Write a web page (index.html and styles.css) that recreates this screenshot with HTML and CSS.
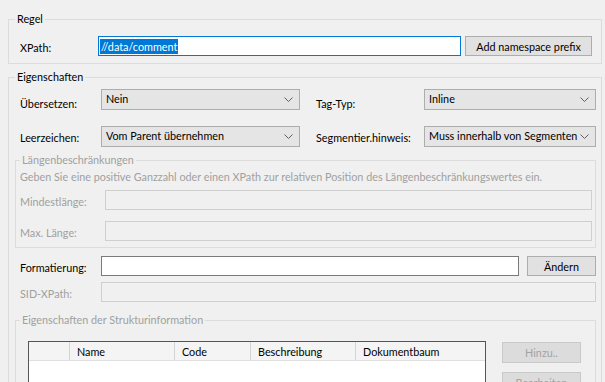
FILE: index.html
```html
<!DOCTYPE html>
<html lang="de">

<head>
    <meta charset="UTF-8">
    <title>Regel bearbeiten</title>
    <link rel="stylesheet" href="styles.css">
</head>

<body>
    <div class="dialog">
        <!-- Regel -->
        <fieldset class="group group-rule">
            <legend>Regel</legend>
            <div class="row">
                <label class="lbl lbl-xpath">XPath:</label>
                <div class="textbox focused"><span class="selected">//data/comment</span></div>
                <button class="btn btn-ns">Add namespace prefix</button>
            </div>
        </fieldset>

        <!-- Eigenschaften -->
        <fieldset class="group group-props">
            <legend>Eigenschaften</legend>

            <div class="props-grid">
                <label class="lbl lbl-low">Übersetzen:</label>
                <div class="combo"><span>Nein</span>
                    <svg class="chevron" width="9" height="5" viewBox="0 0 9 5"><polyline points="0.5,0.5 4.5,4.5 8.5,0.5" /></svg>
                </div>
                <label class="lbl lbl-right lbl-low">Tag-Typ:</label>
                <div class="combo"><span>Inline</span>
                    <svg class="chevron" width="9" height="5" viewBox="0 0 9 5"><polyline points="0.5,0.5 4.5,4.5 8.5,0.5" /></svg>
                </div>

                <label class="lbl">Leerzeichen:</label>
                <div class="combo"><span>Vom Parent übernehmen</span>
                    <svg class="chevron" width="9" height="5" viewBox="0 0 9 5"><polyline points="0.5,0.5 4.5,4.5 8.5,0.5" /></svg>
                </div>
                <label class="lbl lbl-right">Segmentier.hinweis:</label>
                <div class="combo"><span>Muss innerhalb von Segmenten</span>
                    <svg class="chevron" width="9" height="5" viewBox="0 0 9 5"><polyline points="0.5,0.5 4.5,4.5 8.5,0.5" /></svg>
                </div>
            </div>

            <!-- Längenbeschränkungen (disabled) -->
            <fieldset class="group sub disabled group-length">
                <legend>Längenbeschränkungen</legend>
                <p class="hint">Geben Sie eine positive Ganzzahl oder einen XPath zur relativen Position des Längenbeschränkungswertes ein.</p>
                <div class="row row-min">
                    <label class="lbl lbl-len">Mindestlänge:</label>
                    <div class="textbox off"></div>
                </div>
                <div class="row row-max">
                    <label class="lbl lbl-len">Max. Länge:</label>
                    <div class="textbox off"></div>
                </div>
            </fieldset>

            <div class="row row-format">
                <label class="lbl">Formatierung:</label>
                <div class="textbox plain"></div>
                <button class="btn btn-change">Ändern</button>
            </div>
            <div class="row row-sid">
                <label class="lbl lbl-off">SID-XPath:</label>
                <div class="textbox off"></div>
            </div>

            <!-- Strukturinformation (disabled) -->
            <fieldset class="group sub disabled group-struct">
                <legend>Eigenschaften der Strukturinformation</legend>
                <div class="struct-body">
                    <div class="list">
                        <div class="list-head">
                            <span class="col col-blank"></span>
                            <span class="col col-name">Name</span>
                            <span class="col col-code">Code</span>
                            <span class="col col-desc">Beschreibung</span>
                            <span class="col col-tree">Dokumentbaum</span>
                        </div>
                    </div>
                    <div class="side-buttons">
                        <button class="btn" disabled>Hinzu..</button>
                        <button class="btn" disabled>Bearbeiten</button>
                    </div>
                </div>
            </fieldset>
        </fieldset>
    </div>
</body>

</html>
```

FILE: styles.css
```css
/* Base */
html, body {
    margin: 0;
    padding: 0;
    height: 382px;
    overflow: hidden;
    background-color: #f0f0f0;
    font-family: Lato, 'Liberation Sans', sans-serif;
    font-size: 10.8px;
    color: #000;
}

.dialog {
    padding: 12px 3px 0 8px;
}

/* Group boxes */
.group {
    margin: 0;
    border: 1px solid #dcdcdc;
    padding: 0 5px 0 6px;
    min-width: 0;
}

.group legend {
    padding: 0 2px;
    line-height: 14px;
}

.disabled legend,
.disabled .hint,
.disabled .lbl,
.lbl-off {
    color: #a0a0a0;
}

.group-rule {
    padding: 10px 9px 7px 6px;
}

.group-props {
    margin-top: 6px;
    padding-top: 5px;
}

.sub {
    padding: 3px 3px 6px 4px;
}

/* Rows */
.row {
    display: flex;
    align-items: center;
    height: 20px;
}

.group-rule .row,
.row-format,
.row-sid {
    padding-left: 5px;
}

.lbl {
    width: 81px;
    flex-shrink: 0;
    padding-top: 2px;
}

.lbl-xpath {
    width: 78px;
}

.lbl-len {
    width: 85px;
}

/* Text boxes */
.textbox {
    flex: 1;
    height: 20px;
    box-sizing: border-box;
    border: 1px solid #7a7a7a;
    background-color: #fff;
    display: flex;
    align-items: center;
    padding-left: 1px;
}

.textbox.focused {
    border-color: #0078d7;
}

.textbox.off {
    background-color: #f0f0f0;
    border-color: #cfcfcf;
}

.textbox.plain {
    flex: none;
    width: 418px;
}

.selected {
    background-color: #0078d7;
    color: #fff;
    line-height: 15px;
    padding: 0 1px;
}

/* Buttons */
.btn {
    font: inherit;
    color: #000;
    height: 20px;
    box-sizing: border-box;
    border: 1px solid #adadad;
    background-color: #e1e1e1;
    padding: 0;
    border-radius: 0;
}

.btn:disabled {
    color: #a3a3a3;
    background-color: #dcdcdc;
    border-color: #c9c9c9;
}

.btn-ns {
    width: 127px;
    margin-left: 4px;
}

.btn-change {
    width: 69px;
    margin-left: 8px;
}

/* Combos */
.props-grid {
    display: grid;
    grid-template-columns: 81px 199px 124px 172px;
    grid-auto-rows: 21px;
    row-gap: 16px;
    padding-left: 5px;
    align-items: center;
}

.lbl-right {
    width: auto;
    padding-left: 16px;
}

.lbl-low {
    padding-top: 7px;
}

.combo {
    height: 21px;
    box-sizing: border-box;
    border: 1px solid #adadad;
    background-color: #e5e5e5;
    display: flex;
    align-items: center;
    justify-content: space-between;
    padding: 0 6px 2px 4px;
}

.chevron {
    fill: none;
    stroke: #606060;
    stroke-width: 1;
    margin-top: 2px;
}

/* Längenbeschränkungen */
.group-length {
    margin-top: 6px;
}

.hint {
    margin: 0;
    line-height: 14px;
}

.row-min {
    margin-top: 6px;
}

.row-max {
    margin-top: 11px;
}

.row-format {
    margin-top: 8px;
}

.row-sid {
    margin-top: 6px;
}

/* Strukturinformation */
.group-struct {
    margin-top: 11px;
    padding-top: 14px;
}

.struct-body {
    display: flex;
    align-items: flex-start;
}

.list {
    width: 458px;
    height: 100px;
    margin-left: 8px;
    box-sizing: border-box;
    border: 1px solid #555;
    background-color: #fff;
}

.list-head {
    display: flex;
    height: 18px;
    background-color: #f4f4f4;
    border-bottom: 1px solid #e0e0e0;
}

.col {
    box-sizing: border-box;
    border-left: 1px solid #d5d5d5;
    padding: 3px 0 0 7px;
    line-height: 14px;
}

.col-blank {
    width: 40px;
    border-left: none;
}

.col-name {
    width: 105px;
}

.col-code {
    width: 76px;
}

.col-desc {
    width: 105px;
}

.col-tree {
    flex: 1;
}

.side-buttons {
    display: flex;
    flex-direction: column;
    gap: 9px;
    margin-left: 16px;
    margin-top: 1px;
}

.side-buttons .btn {
    width: 79px;
    height: 21px;
}
```
